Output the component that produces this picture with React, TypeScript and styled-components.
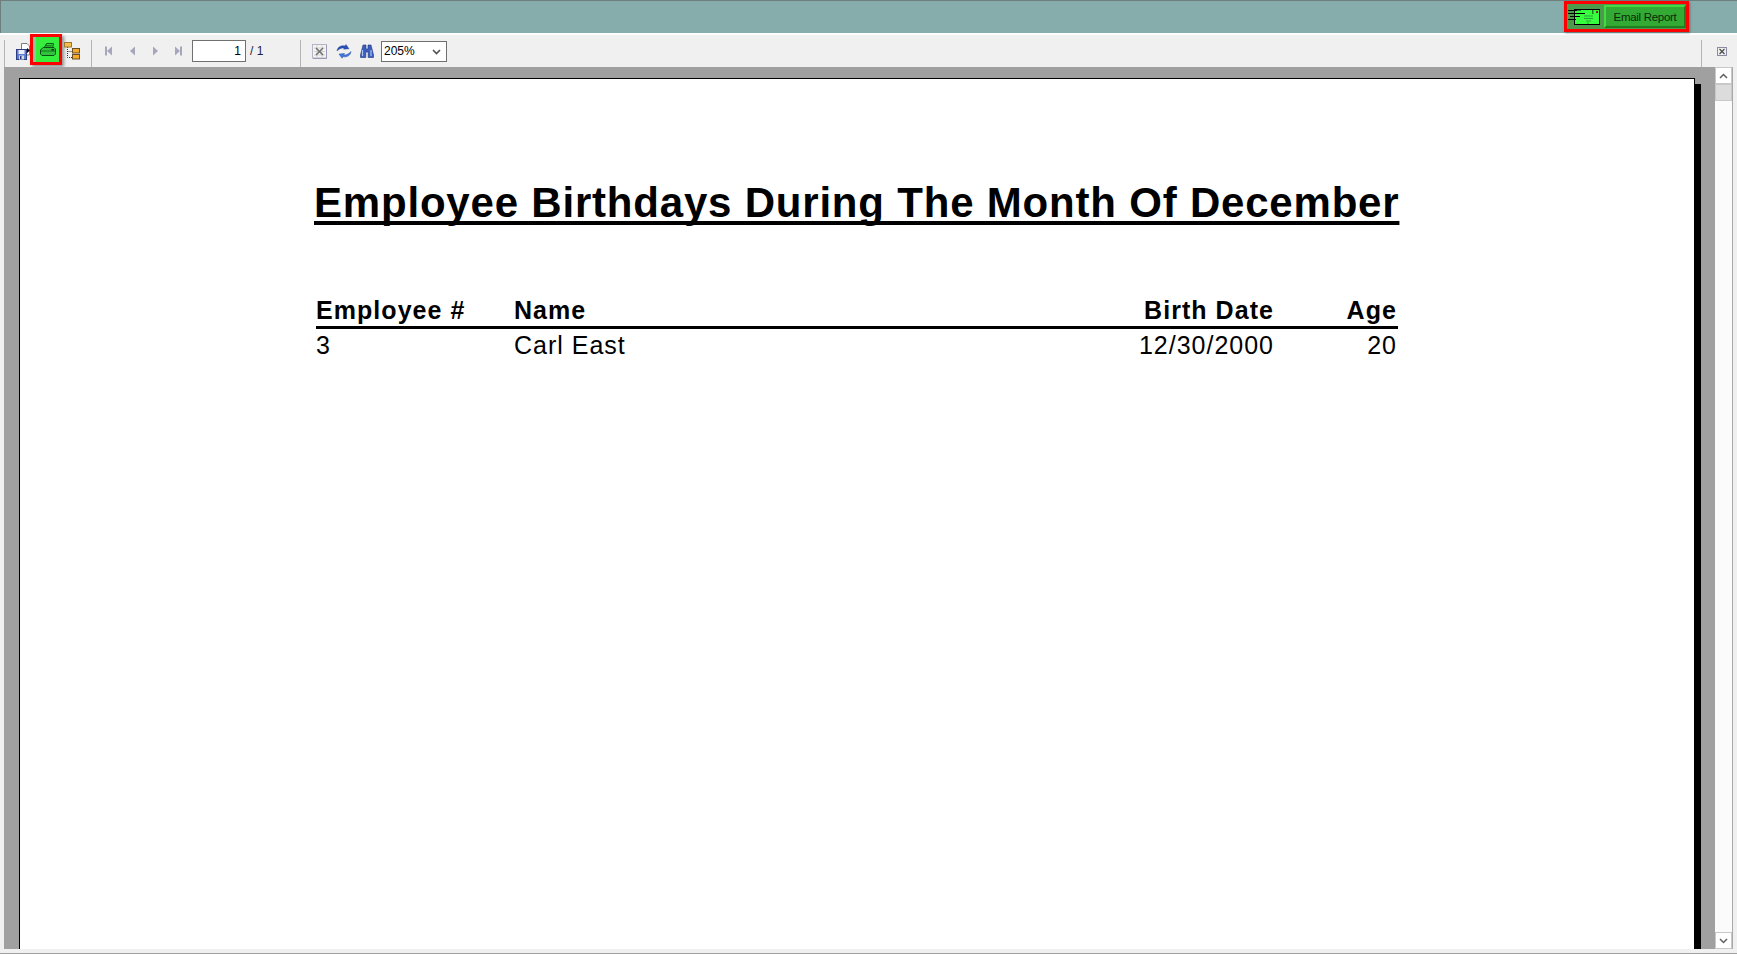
import React from 'react';
import styled, { createGlobalStyle } from 'styled-components';

const GlobalStyle = createGlobalStyle`
  html, body, #root {
    margin: 0;
    padding: 0;
    height: 100%;
    overflow: hidden;
  }
  body {
    background: #ffffff;
    font-family: 'Liberation Sans', Arial, sans-serif;
  }
`;

const Frame = styled.div`
  width: 1737px;
  height: 954px;
  display: flex;
  flex-direction: column;
  background: #ffffff;
  border-bottom: 1px solid #a0a0a0;
  box-sizing: border-box;
`;

const TopBar = styled.div`
  height: 33px;
  flex: none;
  box-sizing: border-box;
  display: flex;
  justify-content: flex-end;
  align-items: flex-start;
  padding: 0 48px 0 0;
  background: #86adab;
  border-top: 1px solid #6f7f7e;
  border-left: 1px solid #6f7f7e;
  margin-bottom: 2px;
`;

const EmailGroup = styled.div`
  width: 125px;
  height: 31px;
  box-sizing: border-box;
  display: flex;
  align-items: center;
  gap: 4px;
  padding: 0 0 0 1px;
  border: 3px solid #ff0000;
  background: #4c9a4c;
  box-shadow: 1px 1px 2px rgba(60, 70, 70, 0.6);
`;

const EmailButton = styled.div`
  width: 82px;
  height: 23px;
  flex: none;
  box-sizing: border-box;
  display: flex;
  align-items: center;
  justify-content: center;
  background: #33aa33;
  border-style: solid;
  border-width: 2px;
  border-color: #45d845 #1f7f1f #1f7f1f #45d845;
  font-size: 11.5px;
  letter-spacing: -0.3px;
  color: #0a2a0a;
`;

const Toolbar = styled.div`
  height: 32px;
  flex: none;
  display: flex;
  align-items: center;
  background: #f0f0f0;
  padding-left: 4px;
`;

const Separator = styled.div<{ $left: number }>`
  flex: none;
  width: 1px;
  height: 27px;
  align-self: flex-end;
  background: #b4b4b4;
  margin-left: ${(p) => p.$left}px;
`;

const IconSlot = styled.div<{ $left: number; $width: number }>`
  flex: none;
  display: flex;
  align-items: center;
  justify-content: flex-start;
  margin-left: ${(p) => p.$left}px;
  width: ${(p) => p.$width}px;
  height: 18px;
`;

const PrintButton = styled.div`
  flex: none;
  width: 32px;
  height: 31px;
  box-sizing: border-box;
  align-self: flex-start;
  margin-top: -1px;
  padding-left: 3px;
  display: flex;
  align-items: center;
  justify-content: center;
  background: #36ee3e;
  border: 3px solid #ff0000;
  box-shadow: 2px 2px 3px rgba(70, 70, 70, 0.55), inset 3px 0 0 #9cbf9c;
`;

const PageInput = styled.input`
  flex: none;
  width: 54px;
  height: 22px;
  box-sizing: border-box;
  margin: 0 0 0 9px;
  padding: 0 4px 0 0;
  border: 1px solid #707070;
  background: #ffffff;
  text-align: right;
  font: 12px 'Liberation Sans', Arial, sans-serif;
  color: #000000;
  outline: none;
`;

const PageCount = styled.span`
  flex: none;
  margin: 0 0 0 4px;
  width: 50px;
  font-size: 12px;
  color: #1c1c3c;
`;

const ZoomWrap = styled.div`
  position: relative;
  flex: none;
  margin: 0 0 0 7px;
  width: 66px;
  height: 21px;
`;

const ZoomSelect = styled.select`
  appearance: none;
  width: 100%;
  height: 100%;
  box-sizing: border-box;
  border: 1px solid #707070;
  border-radius: 0;
  background: #ffffff;
  padding: 0 0 0 2px;
  font: 12px 'Liberation Sans', Arial, sans-serif;
  color: #000000;
  outline: none;
`;

const ZoomChevron = styled.svg`
  position: absolute;
  right: 6px;
  top: 8px;
  pointer-events: none;
`;

const Spacer = styled.div`
  flex: 1;
`;

const Viewer = styled.div`
  flex: 1;
  min-height: 0;
  display: flex;
  background: #f0f0f0;
  padding: 0 4px 4px 4px;
`;

const Canvas = styled.div`
  flex: 1;
  min-width: 0;
  overflow: hidden;
  background: #a0a0a0;
  padding: 11px 0 0 15px;
`;

const ReportPage = styled.div`
  width: 1676px;
  height: 1200px;
  box-sizing: border-box;
  border: 1px solid #000000;
  background: #ffffff;
  box-shadow: 6px 6px 0 #000000;
  padding: 99px 0 0 294px;
`;

const ReportTitle = styled.div`
  display: inline-block;
  font-size: 42px;
  line-height: 50px;
  font-weight: 700;
  letter-spacing: 0.8px;
  white-space: nowrap;
  color: #000000;
  text-decoration: underline;
  text-decoration-thickness: 4px;
  text-underline-offset: 4px;
  text-decoration-skip-ink: none;
`;

const ReportTable = styled.div`
  width: 1082px;
  margin: 68px 0 0 2px;
`;

const ReportRow = styled.div<{ $head?: boolean }>`
  display: grid;
  grid-template-columns: 198px 1fr 160px 123px;
  font-size: 25px;
  line-height: 28px;
  height: 28px;
  color: #000000;
  font-weight: ${(p) => (p.$head ? 700 : 400)};
  letter-spacing: ${(p) => (p.$head ? '1.05px' : '1px')};
  border-bottom: ${(p) => (p.$head ? '3px solid #000000' : 'none')};
  padding-bottom: ${(p) => (p.$head ? '2px' : '0')};
  margin-bottom: ${(p) => (p.$head ? '2px' : '0')};
`;

const Cell = styled.div<{ $right?: boolean }>`
  text-align: ${(p) => (p.$right ? 'right' : 'left')};
  padding-right: ${(p) => (p.$right ? '1px' : '0')};
  white-space: nowrap;
`;

const Scrollbar = styled.div`
  flex: none;
  width: 17px;
  display: flex;
  flex-direction: column;
  background: #fbfbfb;
  border-right: 1px solid #a8a8a8;
`;

const ScrollButton = styled.div`
  flex: none;
  height: 17px;
  box-sizing: border-box;
  display: flex;
  align-items: center;
  justify-content: center;
  background: #ffffff;
  border: 1px solid #c8c8c8;
`;

const ScrollThumb = styled.div`
  flex: none;
  height: 17px;
  background: #dcdcdc;
  border: 1px solid #c8c8c8;
  box-sizing: border-box;
`;

const ScrollTrack = styled.div`
  flex: 1;
`;

const NavArrow = ({ dir, bar }: { dir: 'left' | 'right'; bar?: boolean }) => (
  <svg width="10" height="10" viewBox="0 0 10 10">
    {dir === 'left' ? <path d="M8 0.5V9.5L3 5Z" fill="#a6a6bc" /> : <path d="M2 0.5V9.5L7 5Z" fill="#a6a6bc" />}
    {bar && dir === 'left' && <rect x="1" y="0.5" width="2" height="9" fill="#a6a6bc" />}
    {bar && dir === 'right' && <rect x="7" y="0.5" width="2" height="9" fill="#a6a6bc" />}
  </svg>
);

const ExportIcon = () => (
  <svg width="16" height="17" viewBox="0 0 16 17" style={{ overflow: 'visible' }}>
    <path d="M5.5 0.5H11L13.5 3V12H5.5Z" fill="#ffffff" stroke="#7c7c7c" />
    <path d="M11 5V10L14 7.5Z" fill="#000000" />
    <rect x="0.5" y="6.5" width="10" height="10" fill="#5b7bd5" stroke="#2c3c7f" />
    <rect x="2.5" y="7" width="6" height="4" fill="#eeeef8" />
    <rect x="3" y="12.5" width="5" height="4" fill="#d8d8d8" />
    <rect x="4" y="13" width="1.5" height="3" fill="#2c3c7f" />
  </svg>
);

const PrinterIcon = () => (
  <svg width="16" height="13" viewBox="0 0 16 13">
    <path d="M4 5L6.5 0.6H13.5L12.5 5" fill="#36ee3e" stroke="#0d4d18" />
    <path d="M6 2.4H12M5.4 3.9H11.6" stroke="#0d4d18" strokeWidth="0.7" />
    <path d="M3 4.5H14L15.5 6V11L14 12.5H2L0.5 11V7Z" fill="#2fc43a" stroke="#0d4d18" />
    <path d="M1 8H15" stroke="#0d4d18" strokeWidth="0.7" />
    <rect x="11.5" y="6" width="2.5" height="1.4" fill="#0d2d10" />
  </svg>
);

const TreeIcon = () => (
  <svg width="16" height="18" viewBox="0 0 16 18">
    <path d="M3.5 5V15.5H9M3.5 9.5H9" stroke="#333333" strokeDasharray="1 1" fill="none" />
    <rect x="0.5" y="0.5" width="7" height="4.5" fill="#f6bd4a" stroke="#9a7a30" />
    <rect x="8.5" y="6.5" width="7" height="4.5" fill="#f6a92e" stroke="#6a5020" />
    <rect x="8.5" y="12.5" width="7" height="4.5" fill="#f6a92e" stroke="#6a5020" />
  </svg>
);

const CloseGroupIcon = () => (
  <svg width="15" height="15" viewBox="0 0 15 15">
    <rect x="0.5" y="0.5" width="14" height="13.5" fill="#f4f4f4" stroke="#b4b4c4" />
    <path d="M2 4H13M2 7.5H13M2 11H13M5 1V14M10 1V14" stroke="#cccccc" strokeWidth="0.8" />
    <path d="M4 4L11 11M11 4L4 11" stroke="#707070" strokeWidth="1.5" />
    <path d="M14.5 1V14.5H1" stroke="#9a9ab8" fill="none" />
  </svg>
);

const RefreshIcon = () => (
  <svg width="16" height="15" viewBox="0 0 16 15">
    <path d="M1 7C1.5 3 5 1.2 9 2L10 0.5L13 4.8L7.5 5.2L8.3 4C5.5 3.6 3.5 4.6 1 7Z" fill="#2a52b8" stroke="#1a3a8a" strokeWidth="0.4" />
    <path d="M15 7.5C14.5 11.5 11 13.5 7 12.7L6 14.3L3 10L8.5 9.5L7.7 10.8C10.5 11.2 12.5 10 15 7.5Z" fill="#3f7ae0" stroke="#1a3a8a" strokeWidth="0.4" />
  </svg>
);

const BinocularsIcon = () => (
  <svg width="14" height="14" viewBox="0 0 14 14">
    <path d="M3 1H6V5H8V1H11L13.5 11V13.5H8.2V8H5.8V13.5H0.5V11Z" fill="#3a5fc0" stroke="#1e3478" strokeWidth="0.6" />
    <path d="M2.5 6V12M11 6V12" stroke="#a8c0f0" strokeWidth="1.2" />
  </svg>
);

const SmallCloseIcon = () => (
  <svg width="10" height="9" viewBox="0 0 10 9">
    <rect x="0.5" y="0.5" width="9" height="8" fill="#f0f0f0" stroke="#8a8aa0" />
    <path d="M2.5 2L7.5 7M7.5 2L2.5 7" stroke="#4a4a4a" strokeWidth="1.2" />
  </svg>
);

const EnvelopeIcon = () => (
  <svg width="32" height="18" viewBox="0 0 32 18" style={{ flex: 'none' }}>
    <rect x="6.5" y="1.5" width="25" height="15" fill="#36ff3e" stroke="#000000" />
    <path d="M0 2.5H9M0 5.5H17M2 8.5H12M0 11.5H8" stroke="#000000" strokeWidth="1" />
    <path d="M9 2.5H13" stroke="#0d6d18" strokeWidth="0.8" />
    <rect x="28" y="3" width="2" height="2" fill="#7a1f1f" />
    <path d="M24 3H25.5M24 5H25.5" stroke="#000000" strokeWidth="1" />
    <path d="M16 8H25M16 10.5H25M18 13H23M19 15H21" stroke="#2a8a3a" strokeWidth="0.8" />
  </svg>
);

const Chevron = ({ up }: { up?: boolean }) => (
  <svg width="9" height="6" viewBox="0 0 9 6">
    <path d={up ? 'M1 5L4.5 1.5L8 5' : 'M1 1L4.5 4.5L8 1'} fill="none" stroke="#606060" strokeWidth="1.5" />
  </svg>
);

export default function App() {
  return (
    <Frame>
      <GlobalStyle />
      <TopBar>
        <EmailGroup>
          <EnvelopeIcon />
          <EmailButton>Email Report</EmailButton>
        </EmailGroup>
      </TopBar>
      <Toolbar>
        <Separator $left={0} />
        <IconSlot $left={11} $width={14}>
          <ExportIcon />
        </IconSlot>
        <PrintButton>
          <PrinterIcon />
        </PrintButton>
        <IconSlot $left={2} $width={16}>
          <TreeIcon />
        </IconSlot>
        <Separator $left={11} />
        <IconSlot $left={12} $width={10}>
          <NavArrow dir="left" bar />
        </IconSlot>
        <IconSlot $left={13} $width={10}>
          <NavArrow dir="left" />
        </IconSlot>
        <IconSlot $left={14} $width={10}>
          <NavArrow dir="right" />
        </IconSlot>
        <IconSlot $left={12} $width={10}>
          <NavArrow dir="right" bar />
        </IconSlot>
        <PageInput value="1" readOnly />
        <PageCount>/ 1</PageCount>
        <Separator $left={0} />
        <IconSlot $left={11} $width={15}>
          <CloseGroupIcon />
        </IconSlot>
        <IconSlot $left={9} $width={16}>
          <RefreshIcon />
        </IconSlot>
        <IconSlot $left={8} $width={14}>
          <BinocularsIcon />
        </IconSlot>
        <ZoomWrap>
          <ZoomSelect defaultValue="205%">
            <option>205%</option>
          </ZoomSelect>
          <ZoomChevron width="9" height="6" viewBox="0 0 9 6">
            <path d="M1 1L4.5 4.5L8 1" fill="none" stroke="#505050" strokeWidth="1.6" />
          </ZoomChevron>
        </ZoomWrap>
        <Spacer />
        <Separator $left={0} />
        <IconSlot $left={15} $width={20}>
          <SmallCloseIcon />
        </IconSlot>
      </Toolbar>
      <Viewer>
        <Canvas>
          <ReportPage>
            <ReportTitle>Employee Birthdays During The Month Of December</ReportTitle>
            <ReportTable>
              <ReportRow $head>
                <Cell>Employee #</Cell>
                <Cell>Name</Cell>
                <Cell $right>Birth Date</Cell>
                <Cell $right>Age</Cell>
              </ReportRow>
              <ReportRow>
                <Cell>3</Cell>
                <Cell>Carl East</Cell>
                <Cell $right>12/30/2000</Cell>
                <Cell $right>20</Cell>
              </ReportRow>
            </ReportTable>
          </ReportPage>
        </Canvas>
        <Scrollbar>
          <ScrollButton>
            <Chevron up />
          </ScrollButton>
          <ScrollThumb />
          <ScrollTrack />
          <ScrollButton>
            <Chevron />
          </ScrollButton>
        </Scrollbar>
      </Viewer>
    </Frame>
  );
}
